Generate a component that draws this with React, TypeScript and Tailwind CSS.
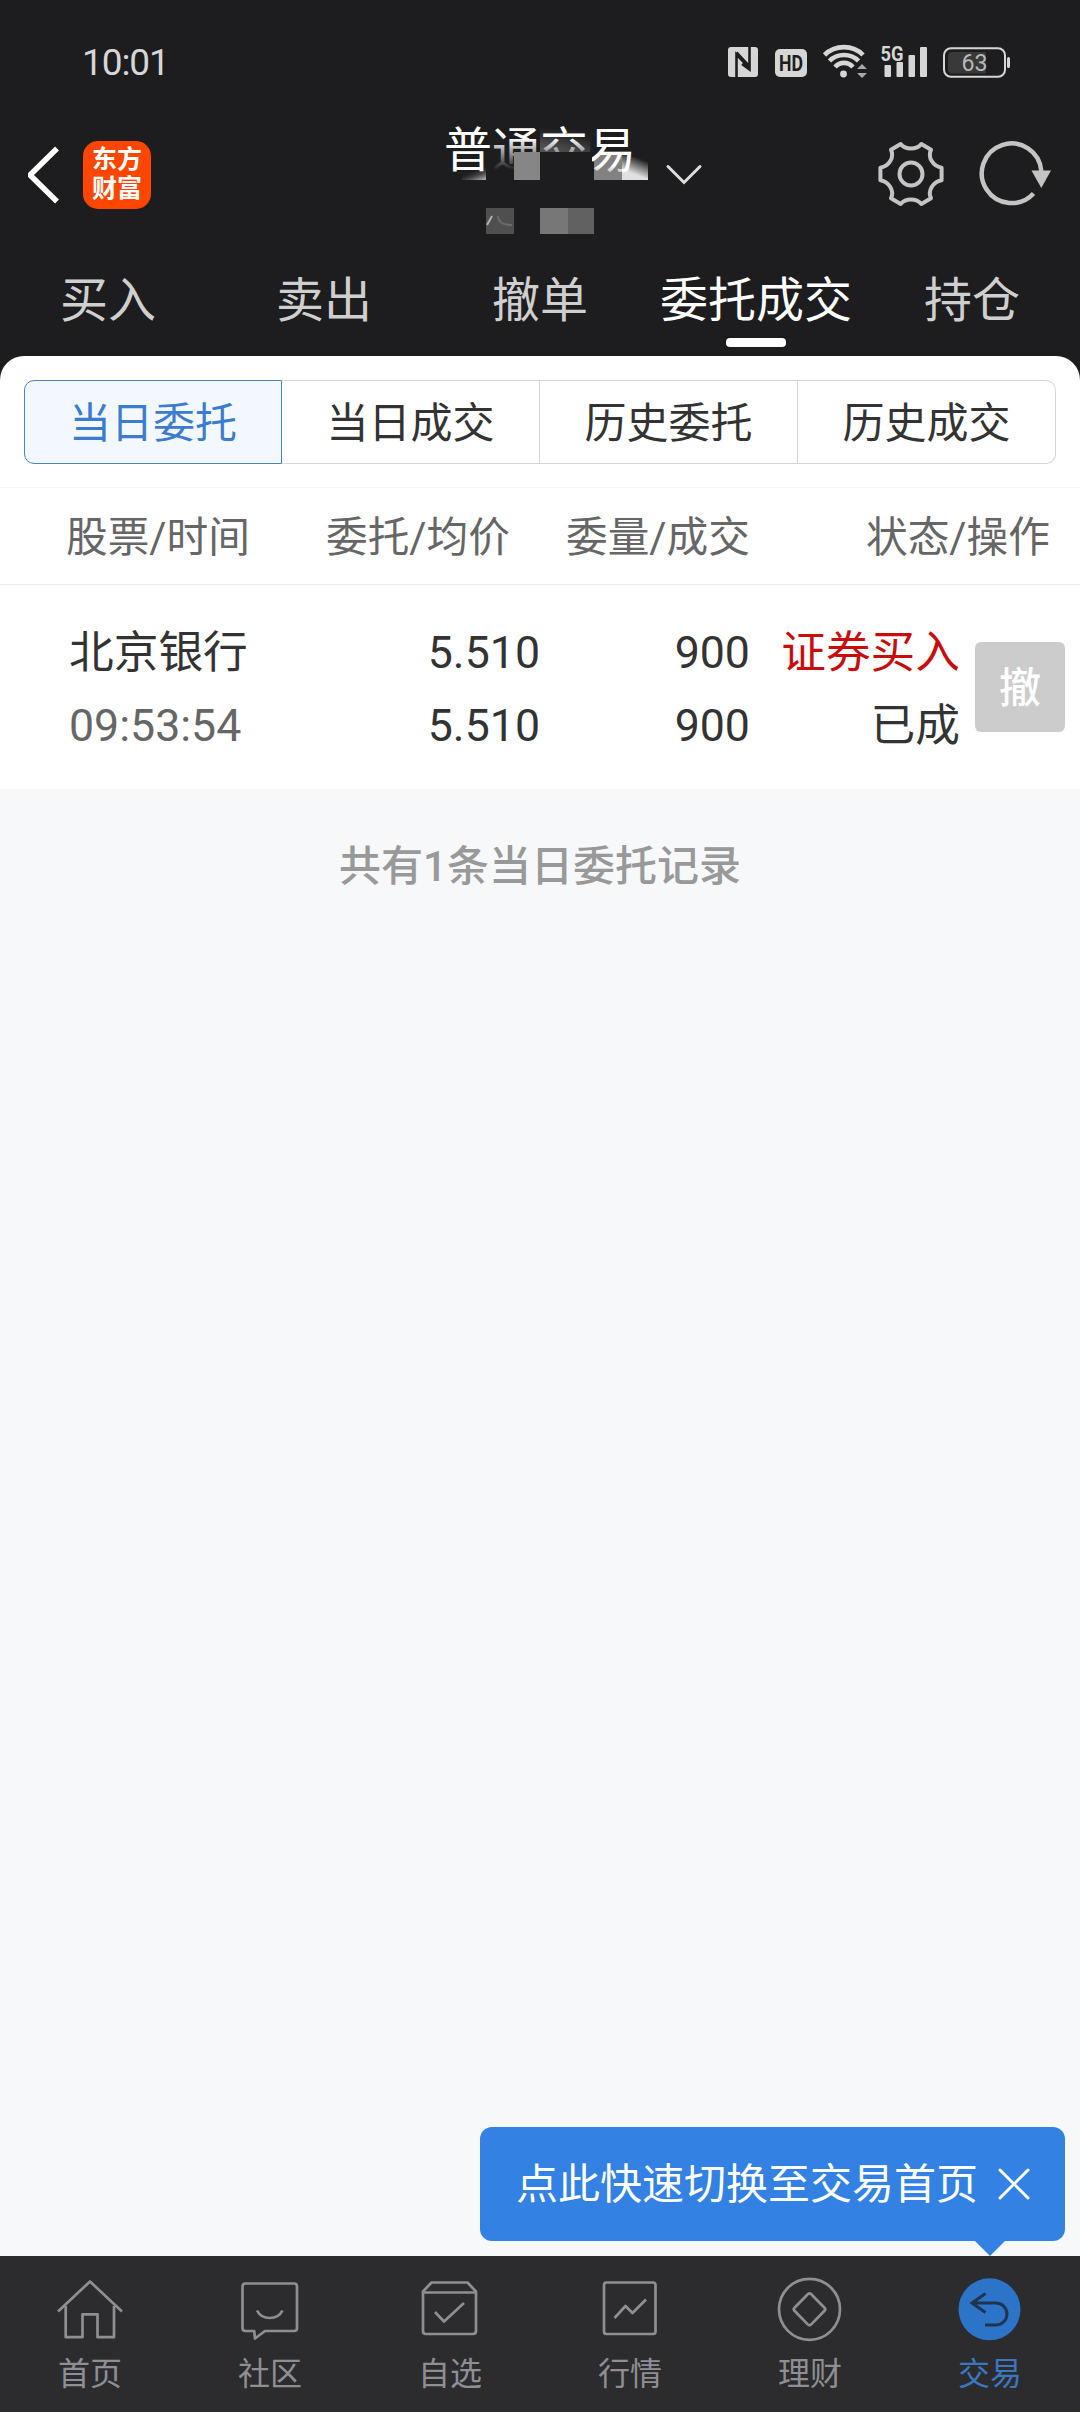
import type { ReactNode } from 'react'
import clsx from 'clsx'

const mainTabs = ['买入', '卖出', '撤单', '委托成交', '持仓']
const filters = ['当日委托', '当日成交', '历史委托', '历史成交']

const orders = [
  {
    name: '北京银行',
    time: '09:53:54',
    price: '5.510',
    avgPrice: '5.510',
    amount: '900',
    filled: '900',
    side: '证券买入',
    status: '已成',
  },
]

function StatusBar() {
  return (
    <div className="flex h-[124px] items-center pl-[82px] pr-[70px] text-[#d6d6d6]">
      <span className="text-[37px] leading-none tracking-[-1.1px]">10:01</span>
      <svg className="ml-auto" width="284" height="60" viewBox="0 -12 284 60" fill="none">
        {/* nfc */}
        <rect x="2" y="3" width="30" height="30" rx="3" fill="#d6d6d6" />
        <path d="M10.5 33V10.5L23.5 24V3M10.5 8.5L23.5 22.5V25.5L16 20" stroke="#1d1d1f" strokeWidth="2.6" />
        {/* hd */}
        <rect x="49" y="5" width="32" height="28" rx="5" fill="#d6d6d6" />
        <text x="65" y="26.500" textAnchor="middle" fontSize="22" fontWeight="700" fill="#1d1d1f" textLength="24" lengthAdjust="spacingAndGlyphs">HD</text>
        {/* wifi */}
        <g stroke="#d6d6d6" strokeWidth="4.600">
          <path d="M98.500 11C109 0.500 127 0.500 137 11" />
          <path d="M103.500 17C111 9 125 9 132.500 17" />
          <path d="M109 23C114 17.500 122 17.500 127 23" />
        </g>
        <circle cx="117.500" cy="30" r="3.400" fill="#d6d6d6" />
        <path d="M131 25L136 20L141 25ZM131 29L136 34L141 29Z" fill="#a8a8a8" />
        {/* signal */}
        <text x="154.500" y="16.500" fontSize="21" fontWeight="700" fill="#d6d6d6" textLength="23" lengthAdjust="spacingAndGlyphs">5G</text>
        <rect x="158.500" y="21" width="6.500" height="12" rx="1" fill="#d6d6d6" />
        <rect x="170.500" y="18" width="6.500" height="15" rx="1" fill="#d6d6d6" />
        <rect x="182.500" y="11" width="6.500" height="22" rx="1" fill="#d6d6d6" />
        <rect x="194" y="3" width="7" height="30" rx="1" fill="#d6d6d6" />
        {/* battery */}
        <rect x="218" y="4.200" width="61" height="28.600" rx="7" stroke="#d6d6d6" strokeWidth="2" />
        <path d="M226 8H260V29.500H226Q222 29.500 222 25.500V12Q222 8 226 8Z" fill="#393939" />
        <rect x="281" y="13" width="3" height="11" rx="1.500" fill="#d6d6d6" />
        <text x="248.500" y="27" textAnchor="middle" fontSize="24" fill="#b8b8b8" textLength="26" lengthAdjust="spacingAndGlyphs">63</text>
      </svg>
    </div>
  )
}

// the account name and number are hidden by mosaic blocks, some of them behind the title glyphs
function AccountTitle() {
  return (
    <div className="relative ml-[293px] h-[126px] w-48">
      <svg className="absolute left-0 top-0" width="210" height="126" viewBox="0 0 210 126">
        <defs>
          <linearGradient id="haze" x1="0" y1="0" x2="0" y2="1">
            <stop offset="0" stopColor="#6a6a6a" stopOpacity="0" />
            <stop offset="1" stopColor="#5c5c5c" />
          </linearGradient>
          <linearGradient id="hazeSide" x1="0" y1="0" x2="1" y2="0">
            <stop offset="0" stopColor="#1d1d1f" stopOpacity="0" />
            <stop offset="1" stopColor="#1d1d1f" />
          </linearGradient>
          <linearGradient id="corner" x1="0.2" y1="0" x2="0.8" y2="1">
            <stop offset="0.35" stopColor="#1d1d1f" stopOpacity="0" />
            <stop offset="1" stopColor="#a0a0a0" />
          </linearGradient>
          <linearGradient id="bright" x1="0.7" y1="0" x2="0.3" y2="1">
            <stop offset="0.15" stopColor="#1d1d1f" />
            <stop offset="0.75" stopColor="#e0e0e0" />
          </linearGradient>
        </defs>
        <rect x="18" y="40" width="24" height="16" fill="url(#corner)" />
        <rect x="96" y="4" width="54" height="24" fill="url(#haze)" />
        <rect x="96" y="4" width="54" height="24" fill="url(#hazeSide)" />
        <path d="M150 56V36L158 30H178V56Z" fill="#828282" />
        <path d="M178 30L204 36V56H178Z" fill="url(#bright)" />
        <rect x="42" y="84" width="28" height="26" fill="#4f4f4f" />
        <path d="M43 101L48 92" stroke="#b0b0b0" strokeWidth="2" />
        <path d="M54 92Q54 101 68 101" fill="none" stroke="#6a6a6a" strokeWidth="2" />
        <rect x="96" y="84" width="28" height="26" fill="#777777" />
        <rect x="124" y="84" width="26" height="26" fill="#616161" />
      </svg>
      <h1 className="relative whitespace-nowrap text-[48px] leading-[54px] text-white">普通交易</h1>
      <svg className="absolute left-0 top-0" width="210" height="60" viewBox="0 0 210 60">
        <defs>
          <linearGradient id="fade" x1="0" y1="0" x2="0" y2="1">
            <stop offset="0" stopColor="#1d1d1f" stopOpacity="0" />
            <stop offset="1" stopColor="#1d1d1f" />
          </linearGradient>
          <linearGradient id="greyFade" x1="0" y1="0" x2="0" y2="1">
            <stop offset="0" stopColor="#5c5c5c" stopOpacity="0" />
            <stop offset="1" stopColor="#505050" />
          </linearGradient>
          <linearGradient id="blockFade" x1="0" y1="0" x2="0" y2="1">
            <stop offset="0.300" stopColor="#828282" stopOpacity="0" />
            <stop offset="0.900" stopColor="#828282" />
          </linearGradient>
        </defs>
        <rect x="48" y="14" width="48" height="32" fill="url(#fade)" />
        <rect x="48" y="46" width="48" height="10" fill="#1d1d1f" />
        <rect x="70" y="28" width="26" height="28" fill="#868686" />
        <rect x="96" y="14" width="50" height="14" fill="url(#greyFade)" opacity="0.600" />
        <rect x="96" y="28" width="52" height="28" fill="#1d1d1f" />
        <rect x="150" y="36" width="28" height="20" fill="url(#blockFade)" />
      </svg>
    </div>
  )
}

function Header() {
  return (
    <div className="flex h-[126px] items-start pl-[27px]">
      <svg className="mt-[22px]" width="32" height="58" viewBox="0 0 32 58" fill="none" stroke="#fff" strokeWidth="5.500" strokeLinejoin="bevel">
        <path d="M30 2.500L3 29L30 55.500" />
      </svg>
      <div className="ml-6 mt-[17px] flex h-[68px] w-[68px] flex-col items-center justify-center rounded-[15px] bg-[#ff4600] pb-[3px] text-[25px] font-bold leading-[29px] text-white">
        <span>东方</span>
        <span>财富</span>
      </div>
      <AccountTitle />
      <svg className="ml-[29px] mt-[38px]" width="38" height="24" viewBox="0 0 38 24" fill="none" stroke="#dedede" strokeWidth="3" strokeLinecap="round">
        <path d="M3 4.500L19 20.500L35 4.500" />
      </svg>
      <svg className="ml-[174px] mt-4" width="68" height="68" viewBox="0 0 68 68" fill="none" stroke="#c4c4c4" strokeWidth="4" strokeLinejoin="round">
        <path d="M23.700 4C28.500 10 39.500 10 44.300 4L54 9.800C50.500 17 55.500 26 64.600 27.800V40.200C55.500 42 50.500 51 54 58.200L44.300 64C39.500 58 28.500 58 23.700 64L14 58.200C17.500 51 12.500 42 3.400 40.200V27.800C12.500 26 17.500 17 14 9.800Z" />
        <circle cx="34" cy="34" r="11.500" />
      </svg>
      <svg className="ml-8 mt-4" width="76" height="68" viewBox="0 0 76 68" fill="none">
        <path d="M64.300 31A29.800 29.800 0 1 0 56.500 53.500" stroke="#c4c4c4" strokeWidth="4.500" />
        <path d="M54.500 30.500H74L64.300 48Z" fill="#c4c4c4" />
      </svg>
    </div>
  )
}

function MainTabs() {
  return (
    <nav className="grid h-[106px] grid-cols-5">
      {mainTabs.map((tab) => {
        const active = tab === '委托成交'
        return (
          <div key={tab} className={clsx('flex flex-col items-center pt-[23px]', active ? 'text-white' : 'text-[#cfcfcf]')}>
            <span className="whitespace-nowrap text-[48px] leading-[56px]">{tab}</span>
            {active && <span className="mt-[9px] h-[9px] w-[60px] rounded-[4px] bg-white" />}
          </div>
        )
      })}
    </nav>
  )
}

function FilterBar() {
  return (
    <div className="grid h-[84px] grid-cols-4 text-[42px] text-[#333]">
      {filters.map((label, i) => (
        <div
          key={label}
          className={clsx(
            'flex items-center justify-center border pt-[3px]',
            i === 0 && 'rounded-l-[10px] border-[#4d86b4] bg-[#f3f8fe] text-[#3c7cce]',
            i > 0 && 'border-l-0 border-[#d5d5d5]',
            i === filters.length - 1 && 'rounded-r-[10px]',
          )}
        >
          {label}
        </div>
      ))}
    </div>
  )
}

function OrderTable() {
  return (
    <div className="bg-white">
      <div className="flex h-[98px] items-center border-y border-b-[#ebebeb] border-t-[#f5f5f5] pl-[66px] pt-[4px] text-[41.7px] text-[#666]">
        <span className="w-[260px]">股票/时间</span>
        <span className="w-[240px]">委托/均价</span>
        <span className="w-[300px]">委量/成交</span>
        <span>状态/操作</span>
      </div>
      {orders.map((o) => (
        <div key={o.time} className="flex h-[204px] items-center pl-[69px] text-[44.7px] leading-[73px] text-[#333]">
          <div className="w-[200px] pt-[5px]">
            <p>{o.name}</p>
            <p className="text-[#666]">{o.time}</p>
          </div>
          <div className="w-[271px] pt-[5px] text-right">
            <p>{o.price}</p>
            <p>{o.avgPrice}</p>
          </div>
          <div className="w-[210px] pt-[5px] text-right">
            <p>{o.amount}</p>
            <p>{o.filled}</p>
          </div>
          <div className="w-[210px] pt-[5px] text-right">
            <p className="text-[#c80d0d]">{o.side}</p>
            <p>{o.status}</p>
          </div>
          <button className="ml-[15px] h-[90px] w-[90px] rounded-md bg-[#ccc] pt-[3px] text-[42px] font-medium leading-[87px] text-white">撤</button>
        </div>
      ))}
    </div>
  )
}

function QuickTip() {
  return (
    <div className="relative mb-[15px] mr-[15px] flex h-[114px] w-[585px] items-center self-end rounded-xl bg-[#3381e3] pl-[36px] text-white">
      <span className="whitespace-nowrap text-[42px]">点此快速切换至交易首页</span>
      <svg className="ml-5" width="32" height="32" viewBox="0 0 32 32" stroke="#fff" strokeWidth="3" strokeLinecap="round">
        <path d="M2 2L30 30M30 2L2 30" />
      </svg>
      <svg className="absolute right-[60px] top-full" width="30" height="15" viewBox="0 0 30 15" fill="#3381e3">
        <path d="M0 0H30L15 15Z" />
      </svg>
    </div>
  )
}

const navItems: { label: string; icon: ReactNode }[] = [
  {
    label: '首页',
    icon: (
      <>
        <path d="M1 35.500L33 5.500L65 35.500" />
        <path d="M8.700 30V61.200H25.500V38.300H40.500V61.200H57V30" />
      </>
    ),
  },
  {
    label: '社区',
    icon: (
      <>
        <path d="M8.500 7.500H57Q60 7.500 60 10.500V52Q60 55 57 55H28L18 62.500L17.200 55H8.500Q5.500 55 5.500 52V10.500Q5.500 7.500 8.500 7.500Z" />
        <path d="M20 34.500C25 44.500 40.500 44.500 45.500 34.500" />
      </>
    ),
  },
  {
    label: '自选',
    icon: (
      <>
        <path d="M6 15.500V55Q6 58 9 58H56Q59 58 59 55V15.500L50.500 6.500H14.500Z" />
        <path d="M6 16.500H59M18 36L27 45.500L47 27" />
      </>
    ),
  },
  {
    label: '行情',
    icon: (
      <>
        <rect x="7" y="6.500" width="51.500" height="51.500" rx="2.500" />
        <path d="M17.500 42L28.500 30L35.500 37L49 23.500" />
      </>
    ),
  },
  {
    label: '理财',
    icon: (
      <>
        <circle cx="32.500" cy="33.300" r="30.500" />
        <path d="M31 18L17.500 31.800Q16 33.300 17.500 34.800L31 48.600Q32.500 50 34 48.600L47.500 34.800Q49 33.300 47.500 31.800L34 18Q32.500 16.600 31 18Z" />
      </>
    ),
  },
]

function BottomNav() {
  return (
    <nav className="grid h-[156px] grid-cols-6 bg-[#2c2c2e] text-[32px] leading-[40px] text-[#8f8f93]">
      {navItems.map((item) => (
        <div key={item.label} className="flex flex-col items-center pt-5">
          <svg width="66" height="66" viewBox="0 0 66 66" fill="none" stroke="currentColor" strokeWidth="2.700" strokeLinejoin="round">
            {item.icon}
          </svg>
          <span className="mt-3">{item.label}</span>
        </div>
      ))}
      <div className="flex flex-col items-center pt-5 text-[#3b77bf]">
        <svg width="66" height="66" viewBox="0 0 66 66" fill="none">
          <circle cx="32.500" cy="33.300" r="31" fill="#2b74c8" />
          <path d="M28.500 17.500L15 27L28.500 36.500M15 27H39A11 11 0 0 1 39 49H28" stroke="#20344d" strokeWidth="3" />
        </svg>
        <span className="mt-3">交易</span>
      </div>
    </nav>
  )
}

export default function App() {
  return (
    <div className="flex h-[2412px] w-[1080px] flex-col bg-[#f6f8fa] font-['Roboto','Noto_Sans_CJK_SC',sans-serif]">
      <header className="bg-[#1d1d1f]">
        <StatusBar />
        <Header />
        <MainTabs />
      </header>
      <div className="bg-[#1d1d1f]">
        <div className="h-[131px] rounded-t-[24px] bg-white px-6 pt-6">
          <FilterBar />
        </div>
      </div>
      <OrderTable />
      <p className="mt-[46px] text-center text-[42px] font-medium leading-[64px] text-[#999]">共有1条当日委托记录</p>
      <div className="mt-auto flex flex-col">
        <QuickTip />
        <BottomNav />
      </div>
    </div>
  )
}
